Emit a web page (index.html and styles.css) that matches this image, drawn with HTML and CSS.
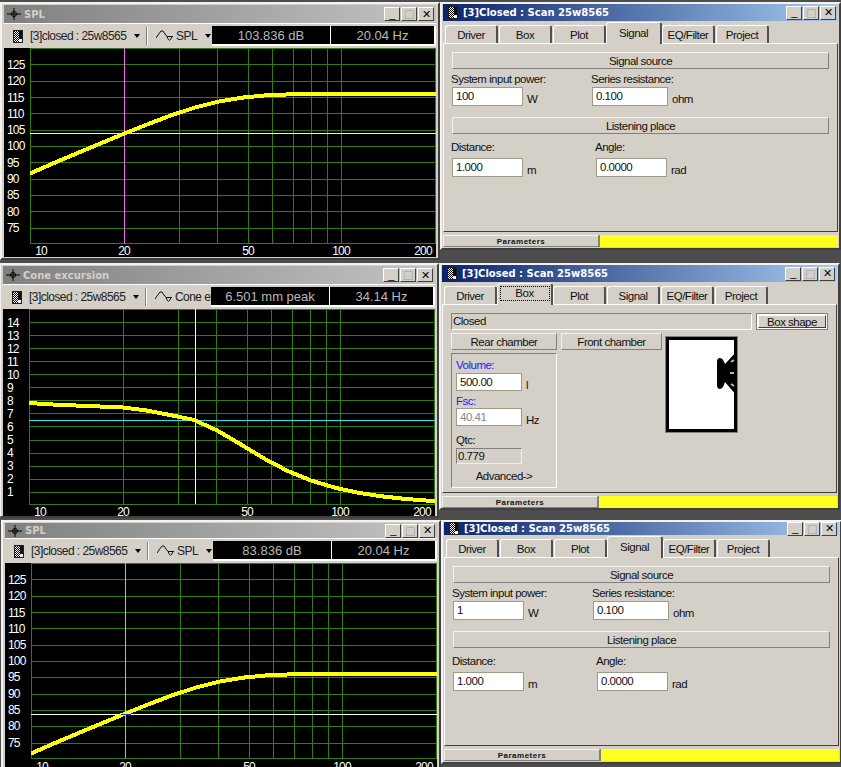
FILE: index.html
```html
<!DOCTYPE html>
<html lang="en">
<head>
    <meta charset="UTF-8">
    <title>Closed : Scan 25w8565</title>
    <link rel="stylesheet" href="styles.css">
</head>
<body>
    <svg class="defs" width="0" height="0">
        <defs>
            <pattern id="dither" width="2" height="2" patternUnits="userSpaceOnUse">
                <rect width="2" height="2" fill="#fff"/>
                <rect width="1" height="1" fill="#000"/>
                <rect x="1" y="1" width="1" height="1" fill="#000"/>
            </pattern>
            <symbol id="doc" viewBox="0 0 10 13">
                <rect x="0.5" y="0.5" width="9" height="12" fill="url(#dither)" stroke="#222"/>
                <rect x="6" y="1" width="3" height="8" fill="#111"/>
                <rect x="6" y="9" width="3" height="3" fill="#eee"/>
            </symbol>
            <symbol id="cross" viewBox="0 0 14 12">
                <path d="M0 6H14M7 0V12" stroke="#000" fill="none"/>
                <circle cx="7" cy="6" r="2.5" fill="none" stroke="#000"/>
            </symbol>
            <symbol id="wave" viewBox="0 0 17 12">
                <path d="M0 8L2 5L5 1H7L9 4L11 6.5H17M11 6.5Q13.5 14 16 6.5" fill="none" stroke="#111"/>
            </symbol>
        </defs>
    </svg>

    <!-- SPL 100 W -->
    <div class="win win-plot win-a">
        <div class="titlebar titlebar-gray">
            <svg class="title-cross"><use href="#cross"/></svg>
            <span class="title-text">SPL</span>
            <div class="capbtns"><span class="capbtn">_</span><span class="capbtn capbtn-off">□</span><span class="capbtn">✕</span></div>
        </div>
        <div class="toolbar">
            <div class="tb-doc">
                <svg class="icon-doc"><use href="#doc"/></svg>
                <span class="tb-text">[3]closed : 25w8565</span>
                <span class="arrow"></span>
            </div>
            <div class="tb-sep"></div>
            <div class="tb-curve">
                <svg class="icon-wave"><use href="#wave"/></svg>
                <span class="tb-text">SPL</span>
                <span class="arrow"></span>
            </div>
            <div class="readouts">
                <div class="readout readout-main">103.836 dB</div>
                <div class="readout readout-freq">20.04 Hz</div>
            </div>
        </div>
        <svg class="plot plot-a" viewBox="4 48 432 209">
            <path class="grid" d="M30.5 48V244M124.5 48V244M179.5 48V244M217.5 48V244M248.5 48V244M272.5 48V244M293.5 48V244M311.5 48V244M327.5 48V244M341.5 48V244M435.5 48V244M30 48.5H436M30 64.5H436M30 81.5H436M30 97.5H436M30 113.5H436M30 130.5H436M30 146.5H436M30 162.5H436M30 179.5H436M30 195.5H436M30 211.5H436M30 228.5H436M30 243.5H436"/>
            <path class="cursor cursor-magenta" d="M124.5 48V244"/>
            <path class="cursor cursor-pale" d="M30 133.5H436"/>
            <path class="curve" d="M30 173.5L53.5 163.2L77 153.3L100.5 143.5L124 133.7L147.5 124.3L171 115.4L194.5 107.7L218 101.7L241.5 97.7L265 95.4L288.5 94.4H436"/>
            <text class="axis" x="7" y="69">125</text><text class="axis" x="7" y="85">120</text><text class="axis" x="7" y="102">115</text><text class="axis" x="7" y="118">110</text><text class="axis" x="7" y="134">105</text><text class="axis" x="7" y="150">100</text><text class="axis" x="7" y="167">95</text><text class="axis" x="7" y="183">90</text><text class="axis" x="7" y="199">85</text><text class="axis" x="7" y="216">80</text><text class="axis" x="7" y="232">75</text>
            <text class="axis mid" x="41" y="255">10</text><text class="axis mid" x="124" y="255">20</text><text class="axis mid" x="248" y="255">50</text><text class="axis mid" x="341" y="255">100</text><text class="axis mid" x="423" y="255">200</text>
        </svg>
    </div>

    <div class="win win-panel win-d">
        <div class="titlebar titlebar-blue">
            <svg class="title-doc"><use href="#doc"/></svg>
            <span class="title-text">[3]Closed : Scan 25w8565</span>
            <div class="capbtns"><span class="capbtn">_</span><span class="capbtn capbtn-off">□</span><span class="capbtn">✕</span></div>
        </div>
        <div class="tabs">
            <div class="tab">Driver</div><div class="tab">Box</div><div class="tab">Plot</div><div class="tab tab-active">Signal</div><div class="tab">EQ/Filter</div><div class="tab">Project</div>
        </div>
        <div class="panel">
            <div class="section">Signal source</div>
            <div class="fields">
                <div class="field">
                    <label class="field-label">System input power:</label>
                    <div class="field-row"><div class="input">100</div><span class="unit">W</span></div>
                </div>
                <div class="field">
                    <label class="field-label">Series resistance:</label>
                    <div class="field-row"><div class="input input-wide">0.100</div><span class="unit">ohm</span></div>
                </div>
            </div>
            <div class="section section-next">Listening place</div>
            <div class="fields fields-low">
                <div class="field">
                    <label class="field-label">Distance:</label>
                    <div class="field-row"><div class="input">1.000</div><span class="unit">m</span></div>
                </div>
                <div class="field">
                    <label class="field-label">Angle:</label>
                    <div class="field-row"><div class="input">0.0000</div><span class="unit">rad</span></div>
                </div>
            </div>
        </div>
        <div class="status"><div class="status-label">Parameters</div><div class="status-bar"></div></div>
    </div>

    <!-- Cone excursion -->
    <div class="win win-plot win-b">
        <div class="titlebar titlebar-gray">
            <svg class="title-cross"><use href="#cross"/></svg>
            <span class="title-text">Cone excursion</span>
            <div class="capbtns"><span class="capbtn">_</span><span class="capbtn capbtn-off">□</span><span class="capbtn">✕</span></div>
        </div>
        <div class="toolbar">
            <div class="tb-doc">
                <svg class="icon-doc"><use href="#doc"/></svg>
                <span class="tb-text">[3]closed : 25w8565</span>
                <span class="arrow"></span>
            </div>
            <div class="tb-sep"></div>
            <div class="tb-curve">
                <svg class="icon-wave"><use href="#wave"/></svg>
                <span class="tb-text">Cone excursion</span>
            </div>
            <div class="readouts">
                <div class="readout readout-main">6.501 mm peak</div>
                <div class="readout readout-freq">34.14 Hz</div>
            </div>
        </div>
        <svg class="plot plot-b" viewBox="3 309 432 209">
            <path class="grid" d="M29.5 309V504M123.5 309V504M178.5 309V504M216.5 309V504M247.5 309V504M271.5 309V504M292.5 309V504M310.5 309V504M326.5 309V504M340.5 309V504M434.5 309V504M29 309.5H435M29 322.5H435M29 335.5H435M29 348.5H435M29 361.5H435M29 374.5H435M29 387.5H435M29 400.5H435M29 413.5H435M29 426.5H435M29 440.5H435M29 453.5H435M29 466.5H435M29 479.5H435M29 492.5H435M29 504.5H435"/>
            <path class="cursor cursor-white" d="M195.5 309V504"/>
            <path class="cursor cursor-cyan" d="M29 420.5H435"/>
            <path class="curve" d="M29 403L52.5 404.5L76 405.5L99.5 406.5L123 407.5L146.5 410.5L170 415L193.5 419.8L217 430.4L240.5 444.2L264 458.5L287.5 470.9L311 480.5L334.5 487.6L358 492.7L381.5 496.3L405 498.9L428.5 500.7L435 501"/>
            <text class="axis" x="7" y="327">14</text><text class="axis" x="7" y="340">13</text><text class="axis" x="7" y="353">12</text><text class="axis" x="7" y="366">11</text><text class="axis" x="7" y="379">10</text><text class="axis" x="7" y="392">9</text><text class="axis" x="7" y="405">8</text><text class="axis" x="7" y="418">7</text><text class="axis" x="7" y="431">6</text><text class="axis" x="7" y="444">5</text><text class="axis" x="7" y="457">4</text><text class="axis" x="7" y="470">3</text><text class="axis" x="7" y="483">2</text><text class="axis" x="7" y="496">1</text>
            <text class="axis mid" x="40" y="516">10</text><text class="axis mid" x="123" y="516">20</text><text class="axis mid" x="247" y="516">50</text><text class="axis mid" x="340" y="516">100</text><text class="axis mid" x="422" y="516">200</text>
        </svg>
    </div>

    <div class="win win-panel win-e">
        <div class="titlebar titlebar-blue">
            <svg class="title-doc"><use href="#doc"/></svg>
            <span class="title-text">[3]Closed : Scan 25w8565</span>
            <div class="capbtns"><span class="capbtn">_</span><span class="capbtn capbtn-off">□</span><span class="capbtn">✕</span></div>
        </div>
        <div class="tabs">
            <div class="tab">Driver</div><div class="tab tab-active"><span class="tab-focus">Box</span></div><div class="tab">Plot</div><div class="tab">Signal</div><div class="tab">EQ/Filter</div><div class="tab">Project</div>
        </div>
        <div class="panel">
            <div class="box-top">
                <div class="box-name">Closed</div>
                <div class="box-shape"><span class="box-shape-btn">Box shape</span></div>
            </div>
            <div class="box-main">
                <div class="box-col">
                    <div class="section">Rear chamber</div>
                    <div class="group">
                        <div class="group-label group-label-blue">Volume:</div>
                        <div class="field-row"><div class="input input-box">500.00</div><span class="unit">l</span></div>
                        <div class="group-label group-label-blue group-label-fsc">Fsc:</div>
                        <div class="field-row"><div class="input input-box input-off">40.41</div><span class="unit">Hz</span></div>
                        <div class="group-label group-label-qtc">Qtc:</div>
                        <div class="readonly">0.779</div>
                        <div class="advanced">Advanced-&gt;</div>
                    </div>
                </div>
                <div class="box-col-front">
                    <div class="section">Front chamber</div>
                    <svg class="box-drawing" viewBox="0 0 73 97">
                        <rect x="0.5" y="0.5" width="72" height="96" fill="#fff" stroke="#808080"/>
                        <rect x="2.5" y="2.5" width="68" height="92" fill="#fff" stroke="#000" stroke-width="3"/>
                        <path d="M52 26Q52 22 55 22Q58 22 60 28L72 15V60L60 46Q58 53 55 53Q52 53 52 49Z" fill="#000"/>
                        <path d="M66 26l3-2M65 37h4M66 48l3 2" stroke="#bbb" stroke-width="2"/>
                    </svg>
                </div>
            </div>
        </div>
        <div class="status"><div class="status-label">Parameters</div><div class="status-bar"></div></div>
    </div>

    <!-- SPL 1 W -->
    <div class="win win-plot win-c">
        <div class="titlebar titlebar-gray titlebar-short">
            <svg class="title-cross"><use href="#cross"/></svg>
            <span class="title-text">SPL</span>
            <div class="capbtns"><span class="capbtn">_</span><span class="capbtn capbtn-off">□</span><span class="capbtn">✕</span></div>
        </div>
        <div class="toolbar">
            <div class="tb-doc">
                <svg class="icon-doc"><use href="#doc"/></svg>
                <span class="tb-text">[3]closed : 25w8565</span>
                <span class="arrow"></span>
            </div>
            <div class="tb-sep"></div>
            <div class="tb-curve">
                <svg class="icon-wave"><use href="#wave"/></svg>
                <span class="tb-text">SPL</span>
                <span class="arrow"></span>
            </div>
            <div class="readouts">
                <div class="readout readout-main">83.836 dB</div>
                <div class="readout readout-freq">20.04 Hz</div>
            </div>
        </div>
        <svg class="plot plot-c" viewBox="5 563 432 209">
            <path class="grid" d="M31.5 563V758M125.5 563V758M180.5 563V758M218.5 563V758M249.5 563V758M273.5 563V758M294.5 563V758M312.5 563V758M328.5 563V758M342.5 563V758M436.5 563V758M31 563.5H437M31 579.5H437M31 596.5H437M31 612.5H437M31 628.5H437M31 645.5H437M31 661.5H437M31 677.5H437M31 694.5H437M31 710.5H437M31 726.5H437M31 743.5H437M31 758.5H437"/>
            <path class="cursor cursor-purple" d="M125.5 563V758"/>
            <path class="cursor cursor-white" d="M31 714.5H437"/>
            <path class="curve" d="M31 753.5L54.5 743.2L78 733.3L101.5 723.5L125 713.7L148.5 704.3L172 695.4L195.5 687.7L219 681.7L242.5 677.7L266 675.4L289.5 674.4H437"/>
            <path class="cursor cursor-blue" d="M121 714.5H131"/>
            <text class="axis" x="8" y="584">125</text><text class="axis" x="8" y="600">120</text><text class="axis" x="8" y="617">115</text><text class="axis" x="8" y="633">110</text><text class="axis" x="8" y="649">105</text><text class="axis" x="8" y="665">100</text><text class="axis" x="8" y="681">95</text><text class="axis" x="8" y="698">90</text><text class="axis" x="8" y="714">85</text><text class="axis" x="8" y="730">80</text><text class="axis" x="8" y="747">75</text>
            <text class="axis mid" x="42" y="771">10</text><text class="axis mid" x="125" y="771">20</text><text class="axis mid" x="249" y="771">50</text><text class="axis mid" x="342" y="771">100</text><text class="axis mid" x="424" y="771">200</text>
        </svg>
    </div>

    <div class="win win-panel win-f">
        <div class="titlebar titlebar-blue titlebar-short">
            <svg class="title-doc"><use href="#doc"/></svg>
            <span class="title-text">[3]Closed : Scan 25w8565</span>
            <div class="capbtns"><span class="capbtn">_</span><span class="capbtn capbtn-off">□</span><span class="capbtn">✕</span></div>
        </div>
        <div class="tabs">
            <div class="tab">Driver</div><div class="tab">Box</div><div class="tab">Plot</div><div class="tab tab-active">Signal</div><div class="tab">EQ/Filter</div><div class="tab">Project</div>
        </div>
        <div class="panel">
            <div class="section">Signal source</div>
            <div class="fields">
                <div class="field">
                    <label class="field-label">System input power:</label>
                    <div class="field-row"><div class="input">1</div><span class="unit">W</span></div>
                </div>
                <div class="field">
                    <label class="field-label">Series resistance:</label>
                    <div class="field-row"><div class="input input-wide">0.100</div><span class="unit">ohm</span></div>
                </div>
            </div>
            <div class="section section-next">Listening place</div>
            <div class="fields fields-low">
                <div class="field">
                    <label class="field-label">Distance:</label>
                    <div class="field-row"><div class="input">1.000</div><span class="unit">m</span></div>
                </div>
                <div class="field">
                    <label class="field-label">Angle:</label>
                    <div class="field-row"><div class="input">0.0000</div><span class="unit">rad</span></div>
                </div>
            </div>
        </div>
        <div class="status"><div class="status-label">Parameters</div><div class="status-bar"></div></div>
    </div>
</body>
</html>
```

FILE: styles.css
```css
* {
    margin: 0;
    padding: 0;
    box-sizing: border-box;
}

html, body {
    width: 841px;
    height: 767px;
    overflow: hidden;
}

body {
    position: relative;
    background-color: #4d4d4d;
    font-family: "Liberation Sans", Arial, sans-serif;
    font-size: 11.5px;
    letter-spacing: -0.5px;
    color: #111;
}

.defs {
    position: absolute;
}

/* windows on the desktop */
.win {
    position: absolute;
    display: flex;
    flex-direction: column;
    overflow: hidden;
    background-color: #d4d0c8;
    border: 2px solid;
    border-color: #f4f2ee #404040 #404040 #f4f2ee;
}

.win-plot {
    padding: 1px 2px 0;
    width: 440px;
}

.win-panel {
    padding: 0 1px;
    width: 401px;
}

.win-a { left: 0; top: 2px; height: 258px; }
.win-b { left: -1px; top: 263px; height: 255px; z-index: 2; }
.win-c { left: 1px; top: 520px; height: 260px; }
.win-d { left: 440px; top: 2px; height: 248px; }
.win-e { left: 439px; top: 263px; height: 247px; }
.win-f { left: 441px; top: 520px; height: 244px; }

/* title bars */
.titlebar {
    display: flex;
    align-items: center;
    flex-shrink: 0;
    height: 18px;
    padding-left: 3px;
    padding-right: 2px;
}

.titlebar-short {
    height: 15px;
}

.win-panel .titlebar {
    height: 17px;
}

.win-panel .titlebar-short {
    height: 13px;
}

.titlebar-gray {
    background: linear-gradient(to right, #808080, #c4c4c4);
    color: #d4d0c8;
}

.titlebar-blue {
    background: linear-gradient(to right, #0a246a, #a6caf0);
    color: #fff;
}

.title-text {
    font-family: "DejaVu Sans", Verdana, sans-serif;
    font-size: 10px;
    font-weight: bold;
    letter-spacing: 0;
}

.title-cross {
    flex-shrink: 0;
    width: 14px;
    height: 12px;
    margin-right: 3px;
}

.title-doc {
    flex-shrink: 0;
    width: 10px;
    height: 13px;
    margin-left: 2px;
    margin-right: 5px;
}

.capbtns {
    display: flex;
    gap: 1px;
    margin-left: auto;
}

.capbtn {
    display: flex;
    align-items: center;
    justify-content: center;
    width: 16px;
    height: 14px;
    background-color: #d4d0c8;
    border: 1px solid;
    border-color: #fff #404040 #404040 #fff;
    color: #000;
    font-size: 11px;
    line-height: 1;
}

.capbtn-off {
    color: #999;
    font-size: 14px;
}

/* plot window toolbar */
.toolbar {
    display: flex;
    align-items: center;
    flex-shrink: 0;
    height: 25px;
    border-top: 1px solid #fff;
}

.tb-doc {
    display: flex;
    align-items: center;
    flex-shrink: 0;
    width: 142px;
    padding-left: 9px;
}

.tb-text {
    font-size: 12px;
    letter-spacing: -0.55px;
    white-space: nowrap;
    color: #222;
}

.icon-doc {
    flex-shrink: 0;
    width: 10px;
    height: 13px;
    margin-right: 7px;
}

.arrow {
    flex-shrink: 0;
    width: 0;
    height: 0;
    margin-left: 8px;
    border-top: 4px solid #000;
    border-left: 3px solid transparent;
    border-right: 3px solid transparent;
}

.tb-sep {
    flex-shrink: 0;
    width: 2px;
    height: 18px;
    background-color: #808080;
    border-right: 1px solid #fff;
}

.tb-curve {
    display: flex;
    align-items: center;
    flex-shrink: 0;
    width: 64px;
    padding-left: 8px;
    overflow: hidden;
}

.icon-wave {
    flex-shrink: 0;
    width: 17px;
    height: 12px;
    margin-right: 3px;
}

.readouts {
    display: flex;
    gap: 1px;
    height: 20px;
    padding-bottom: 2px;
    background-color: #fff;
    border-right: 2px solid #fff;
    flex: 1;
    align-self: flex-start;
    margin-top: 2px;
}

.readout {
    display: flex;
    align-items: center;
    justify-content: center;
    background-color: #000;
    color: #b8b8b8;
    font-size: 13px;
    letter-spacing: 0;
}

.readout-main {
    width: 118px;
}

.readout-freq {
    flex: 1;
}

/* charts */
.plot {
    display: block;
    flex-shrink: 0;
    width: 432px;
    height: 209px;
    background-color: #000;
}

.grid {
    fill: none;
    stroke: #2f7d0a;
    stroke-width: 1;
    shape-rendering: crispEdges;
}

.cursor {
    fill: none;
    stroke-width: 1;
    shape-rendering: crispEdges;
}

.cursor-magenta { stroke: #f070f0; }
.cursor-pale { stroke: #d0ffb0; }
.cursor-white { stroke: #fff; }
.cursor-cyan { stroke: #30e0f0; }
.cursor-purple { stroke: #c8a0e0; }
.cursor-blue { stroke: #1030e0; }

.curve {
    fill: none;
    stroke: #ffff10;
    stroke-width: 4;
    stroke-linejoin: round;
    shape-rendering: crispEdges;
}

.axis {
    fill: #fff;
    font-size: 12px;
    letter-spacing: -0.8px;
}

.mid {
    text-anchor: middle;
}

/* tabs */
.tabs {
    display: flex;
    align-items: flex-end;
    flex-shrink: 0;
    gap: 1px;
    height: 22px;
    padding-left: 2px;
}

.tab {
    position: relative;
    display: flex;
    align-items: center;
    justify-content: center;
    width: 53px;
    height: 18px;
    background-color: #d4d0c8;
    border-top: 1px solid #fff;
    border-left: 1px solid #fff;
    border-right: 2px solid #505050;
    border-radius: 3px 3px 0 0;
}

.tab-active {
    width: 56px;
    height: 22px;
    margin: 0 -1px -1px;
    z-index: 1;
    padding-bottom: 2px;
}

.tab-focus {
    display: block;
    width: 50px;
    height: 15px;
    line-height: 13px;
    text-align: center;
    border: 1px dotted #000;
}

/* page under the tabs */
.panel {
    flex-shrink: 0;
    height: 189px;
    padding: 8px;
    border: 1px solid;
    border-color: #fff #404040 #404040 #fff;
}

.section {
    display: flex;
    align-items: center;
    justify-content: center;
    height: 17px;
    background-color: #d4d0c8;
    border: 1px solid;
    border-color: #f4f2ee #808080 #808080 #f4f2ee;
}

.section-next {
    margin-top: 11px;
}

.fields {
    display: flex;
    margin-top: 2px;
}

.field {
    width: 140px;
}

.fields-low {
    margin-top: 5px;
}

.fields-low .field {
    width: 144px;
}

.field-label {
    display: block;
    height: 16px;
    line-height: 16px;
    margin-left: -1px;
    white-space: nowrap;
}

.fields-low .field-label {
    height: 19px;
}

.field-row {
    display: flex;
    align-items: center;
}

.input {
    width: 71px;
    height: 19px;
    line-height: 17px;
    padding-left: 3px;
    background-color: #fff;
    border: 1px solid #a09a88;
}

.input-wide {
    width: 76px;
}

.input-box {
    width: 66px;
    height: 18px;
    line-height: 16px;
}

.input-off {
    color: #888;
}

.unit {
    margin-left: 4px;
    padding-top: 5px;
}

/* status strip */
.status {
    display: flex;
    flex-shrink: 0;
    height: 12px;
    margin-top: 3px;
}

.status-label {
    width: 156px;
    line-height: 11px;
    text-align: center;
    font-size: 8px;
    font-weight: bold;
    letter-spacing: 0.5px;
    border: 1px solid;
    border-color: #f4f2ee #808080 #808080 #f4f2ee;
}

.status-bar {
    flex: 1;
    background-color: #ffff22;
    border-left: 1px solid #808080;
}

/* box page */
.box-top {
    display: flex;
    height: 17px;
}

.box-name {
    width: 301px;
    line-height: 15px;
    padding-left: 1px;
    border: 1px solid;
    border-color: #808080 #fff #fff #808080;
}

.box-shape {
    width: 72px;
    margin-left: 4px;
    padding: 1px;
    background-color: #fff;
    border: 1px solid #808080;
}

.box-shape-btn {
    display: block;
    height: 13px;
    line-height: 12px;
    text-align: center;
    border: 1px solid;
    border-color: #fff #404040 #404040 #fff;
    background-color: #d4d0c8;
}

.box-main {
    display: flex;
    gap: 4px;
    margin-top: 3px;
}

.box-col {
    width: 106px;
}

.box-col-front {
    width: 101px;
}

.box-drawing {
    display: block;
    width: 73px;
    height: 97px;
    margin: -14px 0 0 104px;
}

.group {
    height: 135px;
    margin-top: 3px;
    padding: 3px 4px 0;
    border: 1px solid;
    border-color: #808080 #fff #fff #808080;
}

.group-label {
    height: 16px;
    line-height: 16px;
}

.group-label-fsc {
    height: 15px;
    margin-top: 2px;
}

.group-label-qtc {
    margin-top: 6px;
}

.readonly {
    width: 66px;
    height: 16px;
    line-height: 14px;
    padding-left: 1px;
    border: 1px solid;
    border-color: #808080 #eee #eee #808080;
}

.group-label-blue {
    color: #1a1aff;
}

.advanced {
    margin-top: 6px;
    text-align: center;
}
```
